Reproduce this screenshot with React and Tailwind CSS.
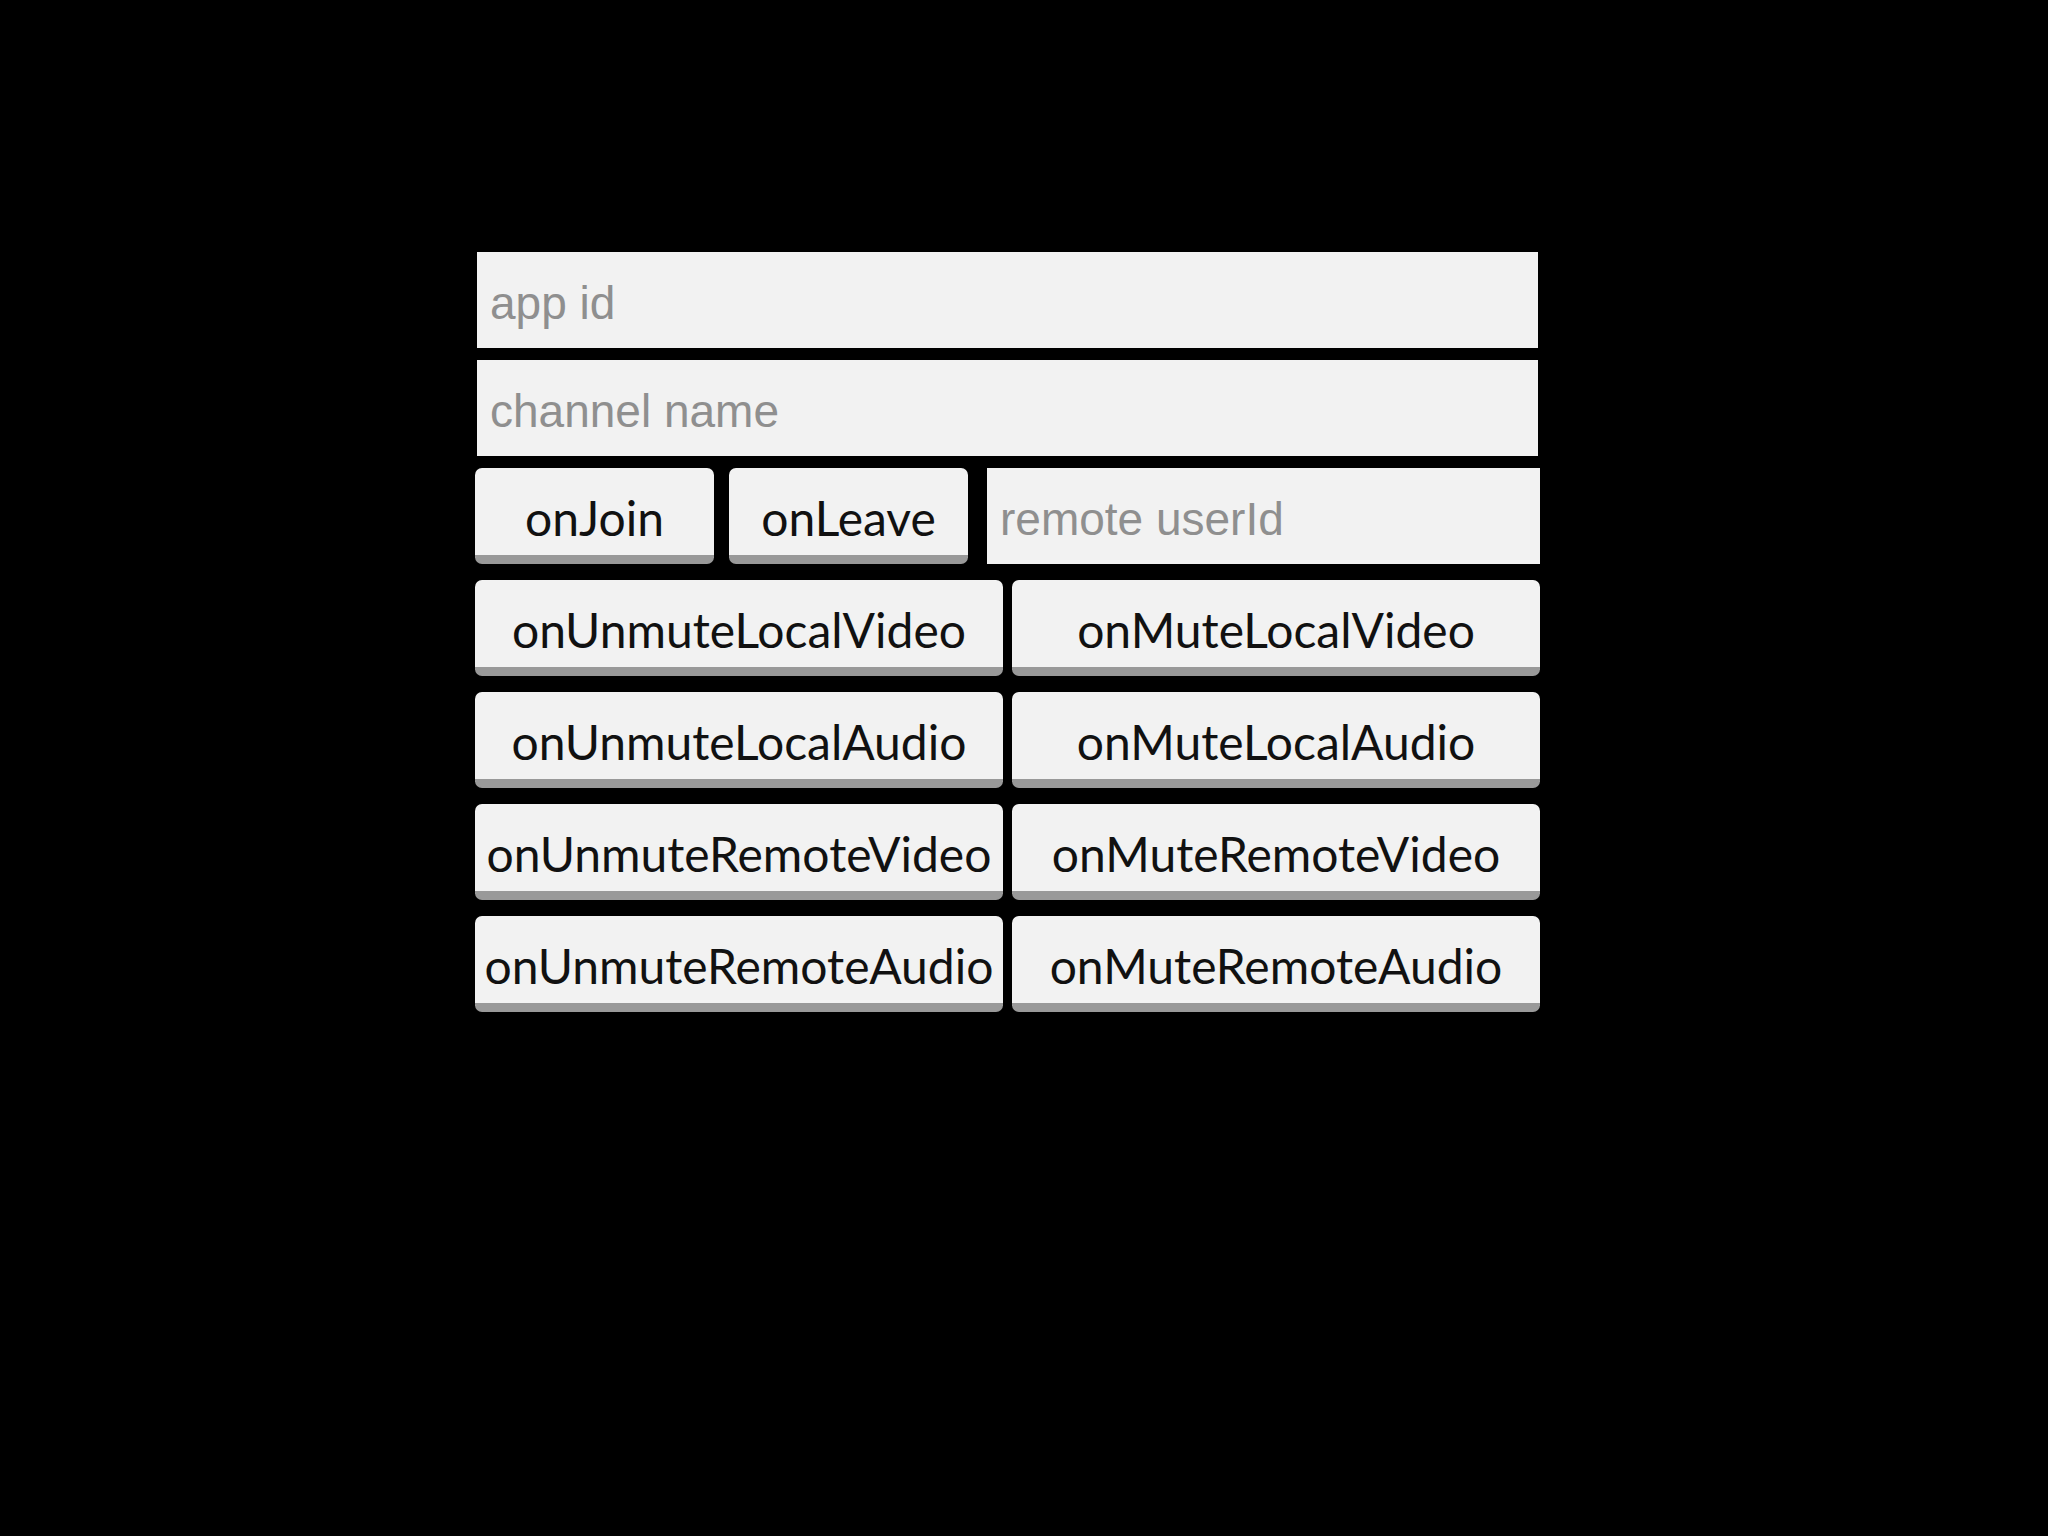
const Btn = ({ label, className = "" }) => (
  <button
    className={`h-[96px] rounded-[7px] bg-[#f2f2f2] border-b-[9px] border-[#999999] pt-[12px] text-[48px] text-[#111111] leading-none flex items-center justify-center whitespace-nowrap ${className}`}
    style={{ fontFamily: "Lato, 'Noto Sans', sans-serif" }}
  >
    {label}
  </button>
);

const Field = ({ placeholder, className = "" }) => (
  <input
    placeholder={placeholder}
    className={`h-[96px] bg-[#f2f2f2] px-[13px] pt-[6px] text-[46px] text-[#222] placeholder:text-[#8f8f8f] outline-none ${className}`}
    style={{ fontFamily: "'Liberation Sans', Arial, sans-serif" }}
  />
);

const rows = [
  ["onUnmuteLocalVideo", "onMuteLocalVideo"],
  ["onUnmuteLocalAudio", "onMuteLocalAudio"],
  ["onUnmuteRemoteVideo", "onMuteRemoteVideo"],
  ["onUnmuteRemoteAudio", "onMuteRemoteAudio"],
];

export default function App() {
  return (
    <div className="w-[2048px] h-[1536px] bg-black pt-[252px] pl-[475px]">
      <div className="w-[1065px] flex flex-col">
        <Field placeholder="app id" className="mx-[2px]" />
        <Field placeholder="channel name" className="mx-[2px] mt-[12px]" />
        <div className="flex mt-[12px]">
          <Btn label="onJoin" className="w-[239px]" />
          <Btn label="onLeave" className="w-[239px] ml-[15px]" />
          <Field placeholder="remote userId" className="flex-1 min-w-0 ml-[19px]" />
        </div>
        <div className="flex flex-col gap-[16px] mt-[16px]">
          {rows.map(([a, b]) => (
            <div key={a} className="flex gap-[9px]">
              <Btn label={a} className="flex-1" />
              <Btn label={b} className="flex-1" />
            </div>
          ))}
        </div>
      </div>
    </div>
  );
}
